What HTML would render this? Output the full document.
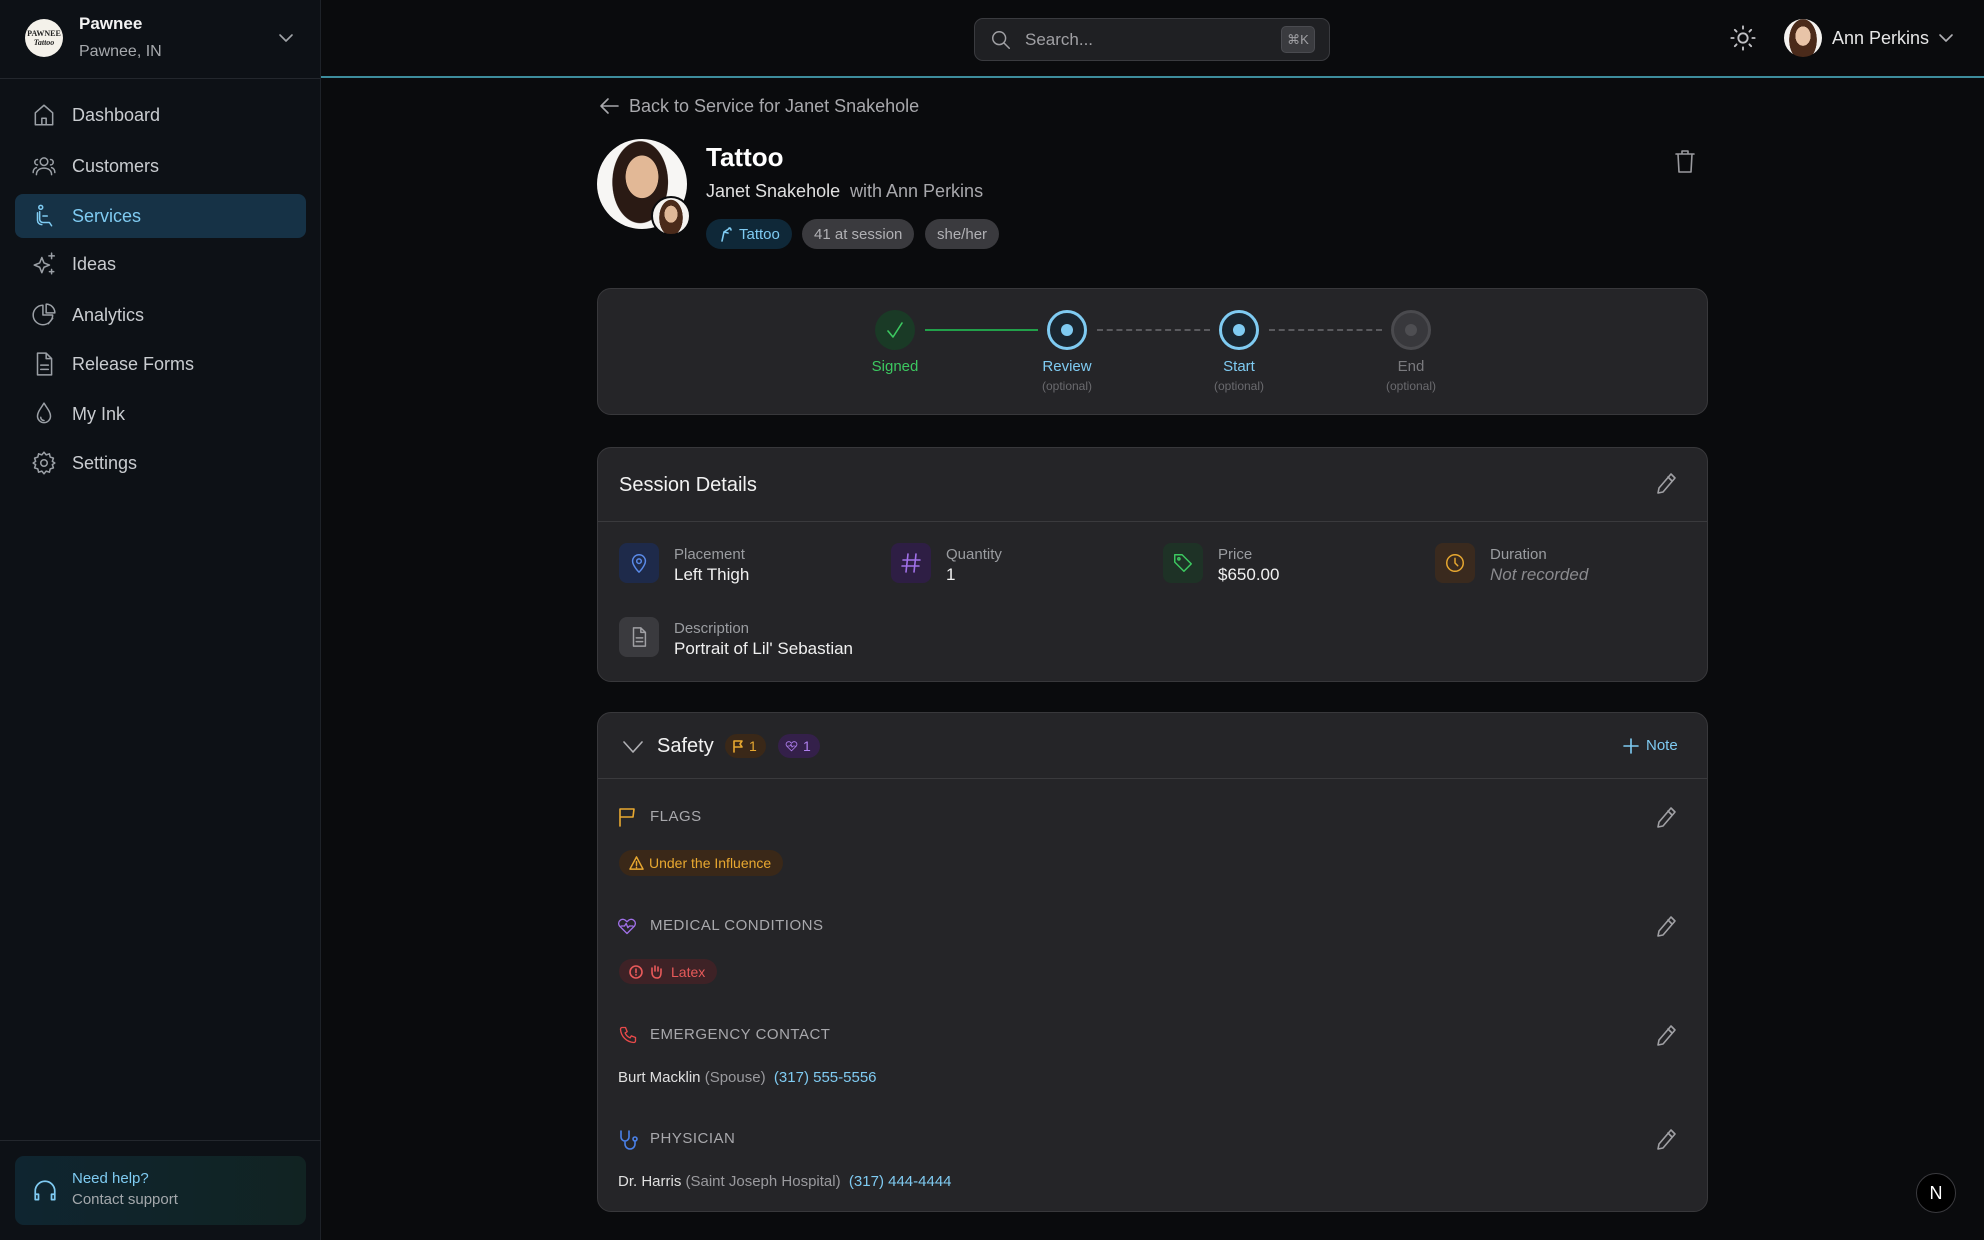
<!DOCTYPE html>
<html><head><meta charset="utf-8"><style>
*{box-sizing:border-box;margin:0;padding:0}
body{width:1984px;height:1240px;background:#0a0b0d;font-family:"Liberation Sans",sans-serif;color:#e6e6e6;position:relative;overflow:hidden}
.a{position:absolute}
.side{left:0;top:0;width:321px;height:1240px;background:#0d1116;border-right:1px solid #1e2228}
.nav{position:absolute;left:15px;width:291px;height:44px;display:flex;align-items:center;font-size:18px;color:#c9ccd0}
.nav svg{position:absolute;left:16px;width:26px;height:26px;fill:none;stroke:#9ba0a6;stroke-width:1.4;stroke-linecap:round;stroke-linejoin:round}
.nav span{position:absolute;left:57px}
.card{position:absolute;left:597px;width:1111px;background:#252528;border:1px solid #38383b;border-radius:14px}
.ic{fill:none;stroke-linecap:round;stroke-linejoin:round;stroke-width:1.6}
.lbl{font-size:15px;color:#9a9ca0}
.val{font-size:17px;color:#f0f0f0}
.box{position:absolute;width:40px;height:40px;border-radius:8px;display:flex;align-items:center;justify-content:center}
.sec{position:absolute;left:52px;font-size:15px;color:#a8a8ac;letter-spacing:.5px}
.pen{position:absolute;left:1056px;width:24px;height:24px}
.pill{position:absolute;height:30px;border-radius:15px;font-size:15px;display:flex;align-items:center;padding:0 12px}
</style></head><body>
<div class="a side">
  <div class="a" style="left:25px;top:19px;width:38px;height:38px;border-radius:50%;background:#f4f1ea;color:#222;font:bold 8px 'Liberation Serif',serif;text-align:center;line-height:9px;padding-top:10px">PAWNEE<br><i>Tattoo</i></div>
  <div class="a" style="left:79px;top:14px;font-size:17px;font-weight:bold;color:#f2f2f2">Pawnee</div>
  <div class="a" style="left:79px;top:43px;font-size:16px;color:#a6a9ad">Pawnee, IN</div>
  <svg class="a ic" style="left:278px;top:31px" width="16" height="14" viewBox="0 0 16 14" stroke="#a0a4a8"><path d="M2 4l6 6 6-6"/></svg>
  <div class="a" style="left:0;top:78px;width:321px;height:1px;background:#23272d"></div>
  <div class="nav" style="top:93px"><svg viewBox="0 0 24 24"><path d="M4 10l8-7 8 7v11H4z M10 21v-6h4v6"/></svg><span>Dashboard</span></div>
  <div class="nav" style="top:144px"><svg viewBox="0 0 24 24"><circle cx="12" cy="8" r="3.5"/><path d="M5 20c0-4 3-6 7-6s7 2 7 6M6 11a2.5 2.5 0 010-5M18 11a2.5 2.5 0 000-5M2 18c0-2 1-4 3-4.5M22 18c0-2-1-4-3-4.5"/></svg><span>Customers</span></div>
  <div class="nav" style="top:194px;background:#163246;border-radius:8px;color:#7fcbf2"><svg viewBox="0 0 24 24" style="stroke:#7fcbf2"><circle cx="9" cy="4" r="1.8"/><path d="M8 8v7a3 3 0 003 3h6l2 3M11 12h4M6 9v7a4 4 0 004 4"/></svg><span>Services</span></div>
  <div class="nav" style="top:242px"><svg viewBox="0 0 24 24"><path d="M10 6l2 5 5 2-5 2-2 5-2-5-5-2 5-2z M19 2v5M16.5 4.5h5M19 17v4M17 19h4"/></svg><span>Ideas</span></div>
  <div class="nav" style="top:293px"><svg viewBox="0 0 24 24"><path d="M11 3a9 9 0 100 18 9 9 0 009-9h-9z M14 2v8h8a8 8 0 00-8-8z M20 15l-4 5"/></svg><span>Analytics</span></div>
  <div class="nav" style="top:342px"><svg viewBox="0 0 24 24"><path d="M6 2h8l5 5v15H6z M14 2v5h5 M9 13h7M9 17h7"/></svg><span>Release Forms</span></div>
  <div class="nav" style="top:392px"><svg viewBox="0 0 24 24"><path d="M12 2c3 5 6 8 6 12a6 6 0 01-12 0c0-4 3-7 6-12z M9 15a3 3 0 003 3"/></svg><span>My Ink</span></div>
  <div class="nav" style="top:441px"><svg viewBox="0 0 24 24"><circle cx="12" cy="12" r="3"/><path d="M12 2l2 2.5 3-1 .7 3 3 1-1 3L22 12l-2.3 1.5 1 3-3 1-.7 3-3-1L12 22l-2-2.5-3 1-.7-3-3-1 1-3L2 12l2.3-1.5-1-3 3-1 .7-3 3 1z"/></svg><span>Settings</span></div>
  <div class="a" style="left:0;top:1140px;width:321px;height:1px;background:#23272d"></div>
  <div class="a" style="left:15px;top:1156px;width:291px;height:69px;border-radius:9px;background:linear-gradient(90deg,#0f2530,#112322)">
    <svg class="a ic" style="left:17px;top:22px" width="26" height="26" viewBox="0 0 24 24" stroke="#7fcbf2"><path d="M3 18v-6a9 9 0 0118 0v6M3 15h3v5H3zM18 15h3v5h-3z"/></svg>
    <div class="a" style="left:57px;top:14px;font-size:15px;color:#7fcbf2">Need help?</div>
    <div class="a" style="left:57px;top:35px;font-size:15px;color:#a4a8ac">Contact support</div>
  </div>
</div>
<!-- header -->
<div class="a" style="left:974px;top:18px;width:356px;height:43px;background:#1f2023;border:1px solid #3a3b3f;border-radius:9px">
  <svg class="a ic" style="left:15px;top:10px" width="22" height="22" viewBox="0 0 24 24" stroke="#a0a0a4"><circle cx="10" cy="10" r="7"/><path d="M15 15l6 6"/></svg>
  <div class="a" style="left:50px;top:11px;font-size:17px;color:#a0a0a4">Search...</div>
  <div class="a" style="left:306px;top:7px;width:34px;height:27px;background:#3a3b3f;border:1px solid #4a4b50;border-radius:5px;font-size:13px;color:#a0a0a4;text-align:center;line-height:25px">⌘K</div>
</div>
<svg class="a ic" style="left:1729px;top:24px" width="28" height="28" viewBox="0 0 24 24" stroke="#c0c0c4" stroke-width="1.3"><circle cx="12" cy="12" r="4"/><path d="M12 2v2M12 20v2M2 12h2M20 12h2M5 5l1.5 1.5M17.5 17.5L19 19M5 19l1.5-1.5M17.5 6.5L19 5"/></svg>
<div class="a" style="left:1784px;top:19px;width:38px;height:38px;border-radius:50%;background:radial-gradient(ellipse 22% 28% at 50% 45%,#e8c4a8 0 90%,transparent 92%),radial-gradient(ellipse 40% 60% at 50% 55%,#4a2a1a 0 90%,transparent 92%),#f5f3f0"></div>
<div class="a" style="left:1832px;top:28px;font-size:18px;color:#e6e6e6">Ann Perkins</div>
<svg class="a ic" style="left:1938px;top:32px" width="16" height="12" viewBox="0 0 16 12" stroke="#b0b0b4"><path d="M2 3l6 6 6-6"/></svg>
<div class="a" style="left:321px;top:76px;width:1663px;height:2px;background:#3d8c9c"></div>
<!-- back -->
<svg class="a ic" style="left:598px;top:96px" width="22" height="20" viewBox="0 0 22 20" stroke="#a8a8ac"><path d="M20 10H3M10 3l-7 7 7 7"/></svg>
<div class="a" style="left:629px;top:96px;font-size:18px;color:#a8a8ac">Back to Service for Janet Snakehole</div>
<!-- avatar -->
<div class="a" style="left:597px;top:139px;width:90px;height:90px;border-radius:50%;background:radial-gradient(ellipse 20% 26% at 50% 42%,#e2b896 0 90%,transparent 92%),radial-gradient(ellipse 34% 50% at 48% 48%,#2a1a14 0 90%,transparent 92%),#f7f6f4"></div>
<div class="a" style="left:651px;top:196px;width:40px;height:40px;border-radius:50%;border:2px solid #0a0b0d;background:radial-gradient(ellipse 20% 26% at 50% 45%,#e0b898 0 90%,transparent 92%),radial-gradient(ellipse 36% 55% at 50% 55%,#4a2a1a 0 90%,transparent 92%),#f5f3f0"></div>
<div class="a" style="left:706px;top:142px;font-size:26px;font-weight:bold;color:#fff">Tattoo</div>
<div class="a" style="left:706px;top:181px;font-size:18px;color:#e0e0e0">Janet Snakehole</div>
<div class="a" style="left:850px;top:181px;font-size:18px;color:#a8a8ac">with Ann Perkins</div>
<div class="pill" style="left:706px;top:219px;background:#0f2838;color:#7fcbf2;padding-left:33px">
  <svg class="a ic" style="left:12px;top:7px" width="16" height="16" viewBox="0 0 16 16" stroke="#7fcbf2"><path d="M4 15l2-9 6-4M6 6l4 1M11 2a2 2 0 012 2"/></svg>Tattoo</div>
<div class="pill" style="left:802px;top:219px;background:#3a3a3e;color:#b0b0b4">41 at session</div>
<div class="pill" style="left:925px;top:219px;background:#3a3a3e;color:#b0b0b4">she/her</div>
<svg class="a ic" style="left:1673px;top:148px" width="24" height="26" viewBox="0 0 24 26" stroke="#9a9a9e" stroke-width="1.4"><path d="M3 6h18M9 6V3h6v3M5 6l1 18h12l1-18"/></svg>
<!-- steps -->
<div class="card" style="top:288px;height:127px">
  <div class="a" style="left:327px;top:40px;width:113px;height:2px;background:#22a04a"></div>
  <div class="a" style="left:499px;top:40px;width:113px;border-top:2px dashed #5a5a5e"></div>
  <div class="a" style="left:671px;top:40px;width:113px;border-top:2px dashed #5a5a5e"></div>
  <div class="a" style="left:277px;top:21px;width:40px;height:40px;border-radius:50%;background:#1a3a26">
    <svg class="a ic" style="left:10px;top:10px" width="20" height="20" viewBox="0 0 20 20" stroke="#3cc860"><path d="M3 11l5 6 9-14"/></svg></div>
  <div class="a" style="left:449px;top:21px;width:40px;height:40px;border-radius:50%;border:3px solid #7fcbf2;background:#1a2630"><div class="a" style="left:11px;top:11px;width:12px;height:12px;border-radius:50%;background:#7fcbf2"></div></div>
  <div class="a" style="left:621px;top:21px;width:40px;height:40px;border-radius:50%;border:3px solid #7fcbf2;background:#1a2630"><div class="a" style="left:11px;top:11px;width:12px;height:12px;border-radius:50%;background:#7fcbf2"></div></div>
  <div class="a" style="left:793px;top:21px;width:40px;height:40px;border-radius:50%;border:3px solid #4a4a4e;background:#38383c"><div class="a" style="left:11px;top:11px;width:12px;height:12px;border-radius:50%;background:#4e4e52"></div></div>
  <div class="a" style="left:237px;top:69px;width:120px;text-align:center;font-size:15px;color:#3cc860">Signed</div>
  <div class="a" style="left:409px;top:69px;width:120px;text-align:center;font-size:15px;color:#7fcbf2">Review</div>
  <div class="a" style="left:581px;top:69px;width:120px;text-align:center;font-size:15px;color:#7fcbf2">Start</div>
  <div class="a" style="left:753px;top:69px;width:120px;text-align:center;font-size:15px;color:#7a7a7e">End</div>
  <div class="a" style="left:409px;top:90px;width:120px;text-align:center;font-size:12px;color:#6a6a6e">(optional)</div>
  <div class="a" style="left:581px;top:90px;width:120px;text-align:center;font-size:12px;color:#6a6a6e">(optional)</div>
  <div class="a" style="left:753px;top:90px;width:120px;text-align:center;font-size:12px;color:#6a6a6e">(optional)</div>
</div>
<!-- session details -->
<div class="card" style="top:447px;height:235px">
  <div class="a" style="left:21px;top:26px;font-size:20px;color:#f2f2f2">Session Details</div>
  <svg class="pen ic" style="top:24px" viewBox="0 0 24 24" stroke="#a0a0a4" stroke-width="1.4"><path d="M17 2l4 4L9 20l-5 1 1-5z M14 5l4 4"/></svg>
  <div class="a" style="left:0;top:73px;width:1109px;height:1px;background:#3a3a3d"></div>
  <div class="box" style="left:21px;top:95px;background:#1e2a4a"><svg class="ic" width="22" height="22" viewBox="0 0 24 24" stroke="#5a8ae8"><path d="M12 22s7-7 7-12a7 7 0 00-14 0c0 5 7 12 7 12z"/><circle cx="12" cy="10" r="2.5"/></svg></div>
  <div class="a lbl" style="left:76px;top:98px">Placement</div><div class="a val" style="left:76px;top:117px">Left Thigh</div>
  <div class="box" style="left:293px;top:95px;background:#2e1e44"><svg class="ic" width="24" height="24" viewBox="0 0 24 24" stroke="#a070e8"><path d="M9 3L7 21M17 3l-2 18M4 9h17M3 15h17"/></svg></div>
  <div class="a lbl" style="left:348px;top:98px">Quantity</div><div class="a val" style="left:348px;top:117px">1</div>
  <div class="box" style="left:565px;top:95px;background:#1e3226"><svg class="ic" width="22" height="22" viewBox="0 0 24 24" stroke="#3cc860"><path d="M3 3h8l10 10-8 8L3 11z"/><circle cx="7.5" cy="7.5" r="1.2"/></svg></div>
  <div class="a lbl" style="left:620px;top:98px">Price</div><div class="a val" style="left:620px;top:117px">$650.00</div>
  <div class="box" style="left:837px;top:95px;background:#3a2a1e"><svg class="ic" width="22" height="22" viewBox="0 0 24 24" stroke="#e8a830"><circle cx="12" cy="12" r="9"/><path d="M12 7v5l3 3"/></svg></div>
  <div class="a lbl" style="left:892px;top:98px">Duration</div><div class="a val" style="left:892px;top:117px;color:#8a8a8e;font-style:italic">Not recorded</div>
  <div class="box" style="left:21px;top:169px;background:#3a3a3e"><svg class="ic" width="22" height="22" viewBox="0 0 24 24" stroke="#a0a0a4"><path d="M6 2h8l5 5v15H6z M14 2v5h5 M9 13h7M9 17h7"/></svg></div>
  <div class="a lbl" style="left:76px;top:172px">Description</div><div class="a val" style="left:76px;top:191px">Portrait of Lil' Sebastian</div>
</div>
<!-- safety -->
<div class="card" style="top:712px;height:500px">
  <svg class="a ic" style="left:24px;top:26px" width="22" height="16" viewBox="0 0 22 16" stroke="#b0b0b4" stroke-width="1.4"><path d="M2 3l9 10 9-10"/></svg>
  <div class="a" style="left:59px;top:22px;font-size:20px;color:#f2f2f2">Safety</div>
  <div class="a" style="left:127px;top:21px;width:41px;height:24px;border-radius:12px;background:#3a2818;color:#e8a830;font-size:14px">
    <svg class="a ic" style="left:7px;top:6px" width="12" height="13" viewBox="0 0 12 13" stroke="#e8a830" stroke-width="1.3"><path d="M2 12V1h8l-2 3 2 3H2"/></svg><span class="a" style="left:24px;top:4px">1</span></div>
  <div class="a" style="left:180px;top:21px;width:42px;height:24px;border-radius:12px;background:#34204a;color:#b080f0;font-size:14px">
    <svg class="a ic" style="left:7px;top:6px" width="13" height="12" viewBox="0 0 24 22" stroke="#b080f0" stroke-width="2"><path d="M12 20L3 11a5 5 0 018-6l1 1 1-1a5 5 0 018 6z M5 11h4l2-3 2 5 2-2h4"/></svg><span class="a" style="left:25px;top:4px">1</span></div>
  <svg class="a ic" style="left:1024px;top:24px" width="18" height="18" viewBox="0 0 18 18" stroke="#7fcbf2" stroke-width="1.5"><path d="M9 2v14M2 9h14"/></svg>
  <div class="a" style="left:1048px;top:24px;font-size:15px;color:#7fcbf2">Note</div>
  <div class="a" style="left:0;top:65px;width:1109px;height:1px;background:#3a3a3d"></div>

  <svg class="a ic" style="left:20px;top:94px" width="18" height="20" viewBox="0 0 18 20" stroke="#e8a830" stroke-width="1.5"><path d="M2 19V2h14l-1 8H2"/></svg>
  <div class="sec" style="top:95px">FLAGS</div>
  <svg class="pen ic" style="top:93px" viewBox="0 0 24 24" stroke="#a0a0a4" stroke-width="1.4"><path d="M17 2l4 4L9 20l-5 1 1-5z M14 5l4 4"/></svg>
  <div class="pill" style="left:21px;top:137px;height:26px;background:#3a2818;color:#e8a830;font-size:14px;padding-left:30px">
    <svg class="a ic" style="left:10px;top:6px" width="15" height="14" viewBox="0 0 16 15" stroke="#e8a830" stroke-width="1.3"><path d="M8 1l7 13H1z M8 6v4M8 12v.5"/></svg>Under the Influence</div>

  <svg class="a ic" style="left:19px;top:203px" width="20" height="20" viewBox="0 0 24 22" stroke="#a070e8" stroke-width="1.6"><path d="M12 20L3 11a5 5 0 018-6l1 1 1-1a5 5 0 018 6z M5 11h4l2-3 2 5 2-2h4"/></svg>
  <div class="sec" style="top:204px">MEDICAL CONDITIONS</div>
  <svg class="pen ic" style="top:202px" viewBox="0 0 24 24" stroke="#a0a0a4" stroke-width="1.4"><path d="M17 2l4 4L9 20l-5 1 1-5z M14 5l4 4"/></svg>
  <div class="pill" style="left:21px;top:246px;height:25px;background:#3e2226;color:#e85a5a;font-size:14px;padding-left:52px">
    <svg class="a ic" style="left:10px;top:6px" width="14" height="14" viewBox="0 0 14 14" stroke="#e85a5a" stroke-width="1.3"><circle cx="7" cy="7" r="6"/><path d="M7 4v3.5M7 9.5v.5"/></svg>
    <svg class="a ic" style="left:30px;top:5px" width="14" height="15" viewBox="0 0 14 15" stroke="#e85a5a" stroke-width="1.3"><path d="M3 8V4M6 7V2M9 7V3M12 8V5M3 8c0 4 2 6 5 6s4-2 4-6"/></svg>Latex</div>

  <svg class="a ic" style="left:20px;top:312px" width="20" height="20" viewBox="0 0 24 24" stroke="#e84a4a" stroke-width="1.6"><path d="M5 3h4l2 5-2.5 1.5a11 11 0 006 6L16 13l5 2v4a2 2 0 01-2 2A17 17 0 013 5a2 2 0 012-2z"/></svg>
  <div class="sec" style="top:313px">EMERGENCY CONTACT</div>
  <svg class="pen ic" style="top:311px" viewBox="0 0 24 24" stroke="#a0a0a4" stroke-width="1.4"><path d="M17 2l4 4L9 20l-5 1 1-5z M14 5l4 4"/></svg>
  <div class="a" style="left:20px;top:356px;font-size:15px;color:#e0e0e0">Burt Macklin <span style="color:#9a9a9e">(Spouse)</span>&nbsp; <span style="color:#7fcbf2">(317) 555-5556</span></div>

  <svg class="a ic" style="left:20px;top:416px" width="20" height="22" viewBox="0 0 20 22" stroke="#4a80e8" stroke-width="1.6"><path d="M3 2v6a4 4 0 008 0V2M7 12v3a5 5 0 0010 0v-3"/><circle cx="17" cy="10" r="2"/></svg>
  <div class="sec" style="top:417px">PHYSICIAN</div>
  <svg class="pen ic" style="top:415px" viewBox="0 0 24 24" stroke="#a0a0a4" stroke-width="1.4"><path d="M17 2l4 4L9 20l-5 1 1-5z M14 5l4 4"/></svg>
  <div class="a" style="left:20px;top:460px;font-size:15px;color:#e0e0e0">Dr. Harris <span style="color:#9a9a9e">(Saint Joseph Hospital)</span>&nbsp; <span style="color:#7fcbf2">(317) 444-4444</span></div>
</div>
<div class="a" style="left:1916px;top:1173px;width:40px;height:40px;border-radius:50%;background:#000;border:1px solid #3a3a3e;color:#fff;font:18px 'Liberation Sans',sans-serif;text-align:center;line-height:38px">N</div>
</body></html>
